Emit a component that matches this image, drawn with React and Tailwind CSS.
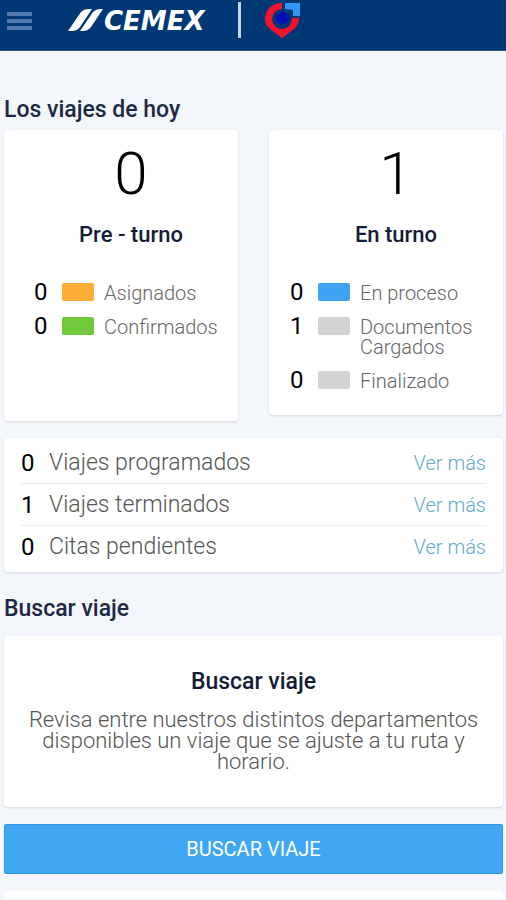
const summaries = [
  {
    total: 0,
    title: 'Pre - turno',
    height: 'min-h-[291px]',
    padding: 'pl-[30px]',
    items: [
      { count: 0, label: 'Asignados', color: 'bg-[#fbad38]' },
      { count: 0, label: 'Confirmados', color: 'bg-[#70c93a]' },
    ],
  },
  {
    total: 1,
    title: 'En turno',
    height: 'min-h-[285px]',
    padding: 'pl-[21px]',
    items: [
      { count: 0, label: 'En proceso', color: 'bg-[#3da2f1]' },
      { count: 1, label: 'Documentos Cargados', color: 'bg-[#d3d3d3]' },
      { count: 0, label: 'Finalizado', color: 'bg-[#d3d3d3]' },
    ],
  },
];

const trips = [
  { count: 0, label: 'Viajes programados' },
  { count: 1, label: 'Viajes terminados' },
  { count: 0, label: 'Citas pendientes' },
];

function Header() {
  return (
    <header className="flex h-[51px] items-start border-b border-[#2c5687] bg-[#003876] pl-[7px] text-white">
      <button type="button" aria-label="Menú" className="mt-[11px] block w-[25px]">
        <svg viewBox="0 0 25 19" className="block w-full" fill="#4f79ad">
          <rect y="1" width="25" height="4" />
          <rect y="8" width="25" height="4" />
          <rect y="15" width="25" height="4" />
        </svg>
      </button>
      <div className="ml-9 flex h-10 items-center">
        <svg width="36" height="24" viewBox="0 0 36 24" fill="#fff" aria-hidden="true">
          <path d="M0 23 L13 4 Q16 1 20 1 L24 1 L12 19 Q9 23 4 23 Z" />
          <path d="M12 23 L25 4 Q28 1 32 1 L35 1 L23 19 Q20 23 15 23 Z" />
        </svg>
        <span className="w-[103px] pt-[2px] font-['DejaVu_Sans',sans-serif] text-[26px] leading-8 font-bold italic">CEMEX</span>
      </div>
      <div className="mt-[2px] ml-[31px] h-9 w-[3px] bg-[#c9d5e4]" />
      <svg className="mt-[2px] ml-[22px]" width="38" height="38" viewBox="0 0 38 38" aria-hidden="true">
        <path d="M19 1 A16 16 0 0 0 2 17 Q2 23 7 27 L19 36 L31 27 Q36 23 36 16 L29 16 A10 10 0 1 1 19 7 Z" fill="#f5122b" />
        <path d="M20 9 L25 12 L27 16 L25 20 L19 23 L14 20 L12 16 L14 12 Z" fill="#0010b8" />
        <path d="M22 1 H37 V14 H30 V8 L22 7 Z" fill="#3396f3" />
      </svg>
    </header>
  );
}

function SummaryCard({ total, title, height, padding, items }) {
  return (
    <section className={`rounded-sm bg-white pt-[14px] pb-6 shadow ${height}`}>
      <p className="pl-5 text-center text-[60px] leading-[60px] font-light text-black">{total}</p>
      <h3 className="mt-[19px] pl-5 text-center text-[22px] leading-6 font-medium text-[#131c38]">{title}</h3>
      <ul className={`mt-[35px] flex flex-col gap-[13px] ${padding}`}>
        {items.map((item) => (
          <li key={item.label} className="flex items-start">
            <span className="w-7 shrink-0 text-[24px] leading-5 text-black">{item.count}</span>
            <span className={`mt-px h-[18px] w-8 shrink-0 rounded-xs ${item.color}`} />
            <span className="ml-[10px] pt-px text-[20px] leading-5 font-light text-[#666]">{item.label}</span>
          </li>
        ))}
      </ul>
    </section>
  );
}

export default function App() {
  return (
    <div className="min-h-screen bg-[#f3f6fb] font-[Roboto,'Liberation_Sans',sans-serif]">
      <Header />
      <main className="pt-[47px] pr-[3px] pl-1">
        <h2 className="text-[23px] leading-6 font-medium text-[#1d2944]">Los viajes de hoy</h2>
        <div className="mt-2 grid grid-cols-2 items-start gap-[31px]">
          {summaries.map((summary) => (
            <SummaryCard key={summary.title} {...summary} />
          ))}
        </div>
        <ul className="mt-[17px] rounded-sm bg-white px-[17px] pt-1 pb-[5px] shadow">
          {trips.map((trip) => (
            <li
              key={trip.label}
              className="flex h-[42px] items-center border-b border-[#ebebeb] last:h-[41px] last:border-b-0"
            >
              <span className="w-7 text-[24px] leading-6 text-black">{trip.count}</span>
              <span className="flex-1 text-[23px] leading-6 font-light text-[#555]">{trip.label}</span>
              <a href="#" className="text-[20px] leading-6 font-light text-[#62a9cf]">Ver más</a>
            </li>
          ))}
        </ul>
        <h2 className="mt-[25px] text-[23px] leading-6 font-medium text-[#1d2944]">Buscar viaje</h2>
        <section className="mt-[15px] rounded-sm bg-white px-5 pt-[34px] pb-[35px] text-center shadow">
          <h3 className="text-[23px] leading-6 font-medium text-[#131c38]">Buscar viaje</h3>
          <p className="mt-[15px] text-[22px] leading-[21px] font-light text-[#555]">
            Revisa entre nuestros distintos departamentos disponibles un viaje que se ajuste a tu ruta y horario.
          </p>
        </section>
        <button
          type="button"
          className="mt-[17px] block h-[50px] w-full rounded-xs border border-[#3295e3] bg-[#40a7f5] pb-px text-[20px] text-white"
        >
          BUSCAR VIAJE
        </button>
        <div className="mt-[17px] h-2 rounded-t-sm bg-white" />
      </main>
    </div>
  );
}
